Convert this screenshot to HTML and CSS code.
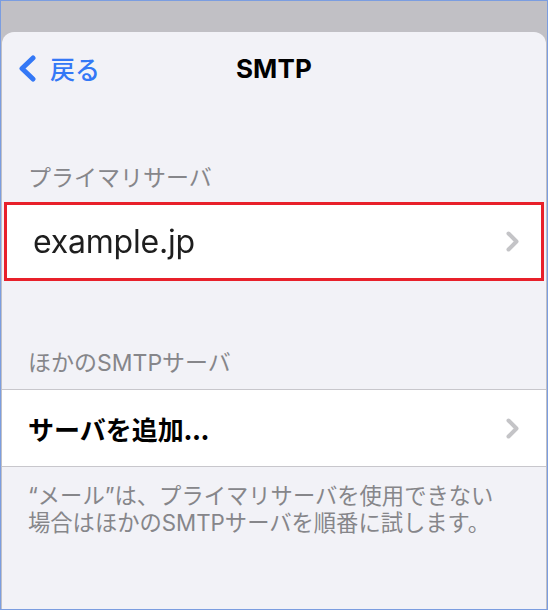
FILE: index.html
```html
<!DOCTYPE html>
<html lang="ja">
  <head>
    <meta charset="UTF-8" />
    <meta name="viewport" content="width=device-width, initial-scale=1.0" />
    <title>SMTP</title>
    <link rel="stylesheet" href="styles.css">
  </head>
  <body>
    <div class="frame">
      <div class="sheet">
        <header class="nav">
          <a class="back" href="#">
            <svg class="back-icon" width="19" height="27" viewBox="0 0 19 27">
              <polyline points="15,3 4,13.5 15,24" />
            </svg>
            <span>戻る</span>
          </a>
          <h1 class="title">SMTP</h1>
          <span></span>
        </header>

        <h2 class="group-title first">プライマリサーバ</h2>
        <div class="row row-primary">
          <span class="server">example.jp</span>
          <svg class="chev" width="13" height="21" viewBox="0 0 13 21">
            <polyline points="2.5,2.5 10.5,10.5 2.5,18.5" />
          </svg>
        </div>

        <h2 class="group-title">ほかのSMTPサーバ</h2>
        <div class="group">
          <div class="row">
            <span class="add">サーバを追加...</span>
            <svg class="chev" width="13" height="21" viewBox="0 0 13 21">
              <polyline points="2.5,2.5 10.5,10.5 2.5,18.5" />
            </svg>
          </div>
        </div>

        <p class="note">“メール”は、プライマリサーバを使用できない<br>場合はほかのSMTPサーバを順番に試します。</p>
      </div>
    </div>
  </body>
</html>
```

FILE: styles.css
```css
*,
*::before,
*::after {
  box-sizing: border-box;
}
:root {
  --bg: #f2f2f7;
  --gray: #86868a;
  --blue: #3478f6;
  --line: #c8c7cc;
  --chev: #c4c4c7;
}
body {
  margin: 0;
  font-family: "Inter", "Noto Sans CJK JP", sans-serif;
}

.frame {
  width: 548px;
  height: 610px;
  border: 1px solid #7b9de0;
  background: #c1c0c5;
  padding: 31px 1px 0 1px;
  display: flex;
  flex-direction: column;
}

.sheet {
  flex: 1;
  background: var(--bg);
  border-radius: 12px 12px 0 0;
  display: flex;
  flex-direction: column;
}

.nav {
  height: 72px;
  display: grid;
  grid-template-columns: 1fr auto 1fr;
  align-items: center;
}
.back {
  display: flex;
  align-items: center;
  gap: 13px;
  padding-left: 16px;
  color: var(--blue);
  text-decoration: none;
  font-size: 25px;
  font-family: "Noto Sans CJK JP", sans-serif;
  font-weight: 500;
}
.back-icon polyline {
  fill: none;
  stroke: var(--blue);
  stroke-width: 5;
  stroke-linecap: round;
  stroke-linejoin: round;
}
.title {
  margin: 0;
  font-size: 26px;
  font-weight: 700;
  color: #000;
  letter-spacing: 0.2px;
}

.group-title {
  margin: 67px 0 11px;
  padding-left: 26px;
  font-size: 23px;
  line-height: 30px;
  font-weight: 400;
  color: var(--gray);
}
.group-title.first {
  margin-top: 59px;
  margin-bottom: 9px;
}

.row {
  height: 76px;
  background: #fff;
  display: flex;
  align-items: center;
  justify-content: space-between;
  padding: 0 27px 0 26px;
}
.row-primary {
  height: 79px;
  margin: 0 2px;
  border: 3px solid #e8202a;
  padding: 0 22px 0 26px;
}
.server {
  font-size: 32px;
  color: #1e1e1e;
  letter-spacing: -0.2px;
  filter: blur(0.4px);
}
.add {
  font-size: 26px;
  font-weight: 700;
  color: #000;
  font-family: "Noto Sans CJK JP", sans-serif;
}
.chev polyline {
  fill: none;
  stroke: var(--chev);
  stroke-width: 4;
  stroke-linecap: round;
  stroke-linejoin: round;
}

.group {
  border-top: 1px solid var(--line);
  border-bottom: 1px solid var(--line);
}

.note {
  margin: 0;
  padding: 15px 20px 0 26px;
  font-size: 22.3px;
  line-height: 27px;
  color: var(--gray);
}
```
